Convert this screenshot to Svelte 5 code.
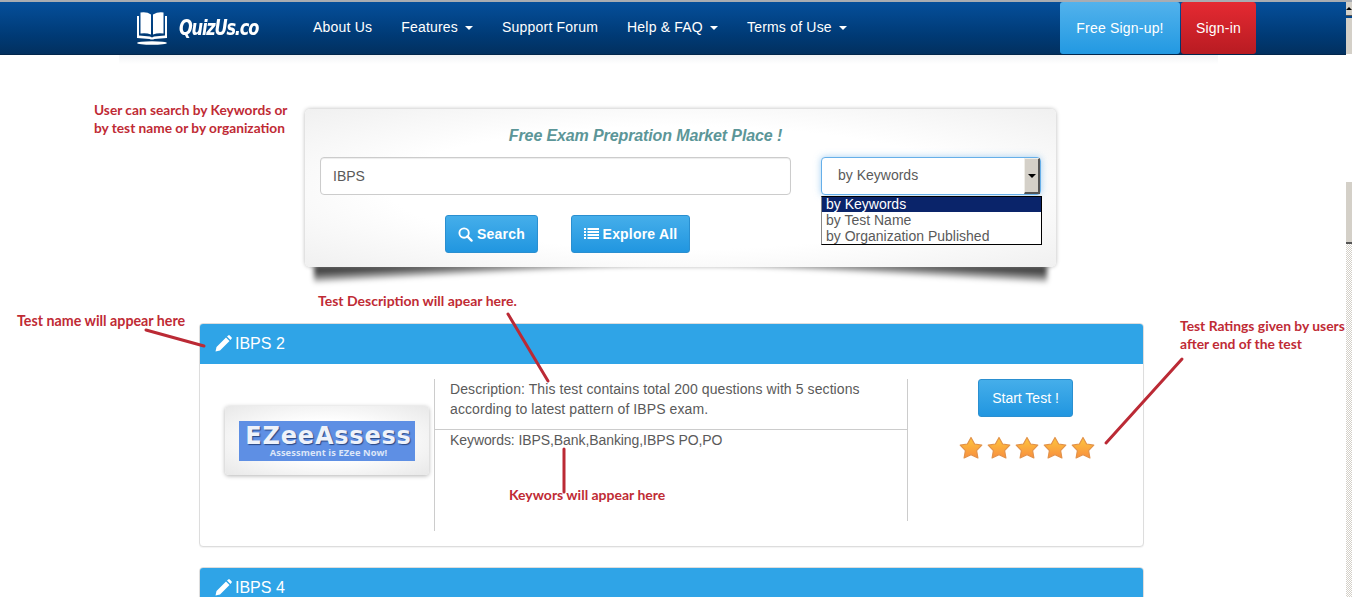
<script>
  const navItems = [
    { label: 'About Us', caret: false },
    { label: 'Features', caret: true },
    { label: 'Support Forum', caret: false },
    { label: 'Help & FAQ', caret: true },
    { label: 'Terms of Use', caret: true }
  ];
  const stars = [0, 1, 2, 3, 4];
</script>

<div class="page">
  <header class="navbar">
    <div class="brand">
      <svg class="book" viewBox="0 0 32 34" width="32" height="34" aria-hidden="true">
        <path d="M1 5 H3 V24.500 L14 25.500 L16 26.500 L18 25.500 L29 24.500 V5 H31 V27 L18.500 28 Q16 29 13.500 28 L1 27 Z" fill="#fff"/>
        <path d="M4.500 1.500 Q11 0.500 15 3.500 V23.500 Q10 21.500 4.500 22.500 Z M17 3.500 Q22 0.500 27.500 1.500 V22.500 Q22 21.500 17 23.500 Z" fill="#fff"/>
        <ellipse cx="16" cy="32" rx="15" ry="1.800" fill="#fff"/>
      </svg>
      <span class="brand-text">QuizUs.co</span>
    </div>
    <nav class="nav">
      {#each navItems as item}
        <span class="nav-item">{item.label}{#if item.caret}<i class="caret"></i>{/if}</span>
      {/each}
    </nav>
    <div class="nav-actions">
      <span class="btn-signup">Free Sign-up!</span>
      <span class="btn-signin">Sign-in</span>
    </div>
  </header>
  <div class="nav-shade"></div>

  <section class="search-row">
    <div class="note note-search">User can search by Keywords or<br />by test name or by organization</div>
    <div class="search-card">
      <h2>Free Exam Prepration Market Place !</h2>
      <div class="search-fields">
        <div class="input">IBPS</div>
        <div class="select-wrap">
          <div class="select">
            <span class="select-label">by Keywords</span>
            <span class="select-arrow"><i></i></span>
          </div>
          <ul class="options">
            <li class="active">by Keywords</li>
            <li>by Test Name</li>
            <li>by Organization Published</li>
          </ul>
        </div>
      </div>
      <div class="search-buttons">
        <span class="btn btn-search">
          <svg viewBox="0 0 16 16" width="15" height="15" aria-hidden="true">
            <circle cx="6.500" cy="6.500" r="5" fill="none" stroke="#fff" stroke-width="2"/>
            <path d="M10 10 L14.500 14.500" stroke="#fff" stroke-width="2.400" stroke-linecap="round"/>
          </svg>
          Search
        </span>
        <span class="btn btn-explore">
          <svg viewBox="0 0 15 13" width="15" height="13" aria-hidden="true">
            <path d="M0 1 H2 M3.500 1 H15 M0 4 H2 M3.500 4 H15 M0 7 H2 M3.500 7 H15 M0 10 H2 M3.500 10 H15" stroke="#fff" stroke-width="1.800"/>
          </svg>
          Explore All
        </span>
      </div>
    </div>
  </section>

  <div class="note note-desc">Test Description will apear here.</div>

  <section class="test-wrap">
    <article class="panel">
      <div class="panel-head">
        <svg class="pencil" viewBox="0 0 17 17" width="17" height="17" aria-hidden="true">
          <path d="M0.500 16.500 L1.500 12 L11 2.500 L14.500 6 L5 15.500 Z M12 1.500 L13.500 0.300 Q14 0 14.500 0.300 L16.700 2.500 Q17 3 16.700 3.500 L15.500 5 Z" fill="#fff"/>
        </svg>
        <span>IBPS 2</span>
      </div>
      <div class="panel-body">
        <div class="logo-col">
          <div class="logo-card">
            <div class="logo">
              <span class="logo-main">EZeeAssess</span>
              <span class="logo-sub">Assessment is EZee Now!</span>
            </div>
          </div>
        </div>
        <div class="info-col">
          <p class="desc">Description: This test contains total 200 questions with 5 sections according to latest pattern of IBPS exam.</p>
          <p class="keys">Keywords: IBPS,Bank,Banking,IBPS PO,PO</p>
        </div>
        <div class="action-col">
          <span class="btn-start">Start Test !</span>
          <div class="stars">
            {#each stars as s}
              <svg viewBox="0 0 24 24" width="24" height="24" aria-hidden="true">
                <defs>
                  <linearGradient id="starFill{s}" x1="0" y1="0" x2="0" y2="1">
                    <stop offset="0" stop-color="#fdc63c"/>
                    <stop offset="1" stop-color="#f98f3f"/>
                  </linearGradient>
                </defs>
                <path d="M12 1.500 L15.600 8 L22.800 9.200 L17.600 14.600 L18.900 22 L12 18.800 L5.100 22 L6.400 14.600 L1.200 9.200 L8.400 8 Z" fill="url(#starFill{s})" stroke="#e2924a" stroke-width="1.200" stroke-linejoin="round"/>
              </svg>
            {/each}
          </div>
        </div>
      </div>
    </article>

    <article class="panel panel-next">
      <div class="panel-head">
        <svg class="pencil" viewBox="0 0 17 17" width="17" height="17" aria-hidden="true">
          <path d="M0.500 16.500 L1.500 12 L11 2.500 L14.500 6 L5 15.500 Z M12 1.500 L13.500 0.300 Q14 0 14.500 0.300 L16.700 2.500 Q17 3 16.700 3.500 L15.500 5 Z" fill="#fff"/>
        </svg>
        <span>IBPS 4</span>
      </div>
    </article>

    <div class="note note-name">Test name will appear here</div>
    <div class="note note-keys">Keywors will appear here</div>
    <div class="note note-rate">Test Ratings given by users<br />after end of the test</div>

    <svg class="arrows" width="1352" height="300" viewBox="0 0 1352 300" aria-hidden="true">
      <g stroke="#bb2a35" stroke-width="3" fill="none" stroke-linecap="round">
        <path d="M146 20 L204 36"/>
        <path d="M508 4 L548 71"/>
        <path d="M564 139 V182"/>
        <path d="M1182 49 L1106 133"/>
      </g>
    </svg>
  </section>

  <div class="scrollbar">
    <div class="sb-btn"><i></i></div>
    <div class="sb-thumb"></div>
    <div class="sb-blank"></div>
    <div class="sb-thumb sb-thumb2"></div>
    <div class="sb-track"></div>
  </div>
</div>

<style>
  :global(body) {
    margin: 0;
    background: #fff;
    font-family: "Liberation Sans", Arial, sans-serif;
    overflow: hidden;
  }
  .page {
    position: relative;
    width: 1352px;
    height: 597px;
    overflow: hidden;
    color: #5a5a5a;
  }
  .navbar {
    display: flex;
    align-items: center;
    height: 55px;
    box-sizing: border-box;
    border-top: 2px solid #a8acb2;
    background: linear-gradient(#054f9b, #003a75 65%, #02305f);
    border-bottom: 1px solid #02264c;
    padding-left: 136px;
    color: #fff;
  }
  .brand {
    display: flex;
    align-items: center;
    gap: 11px;
    width: 177px;
    flex: none;
  }
  .brand-text {
    font-family: "DejaVu Sans Condensed", "DejaVu Sans", sans-serif;
    font-weight: 700;
    font-style: italic;
    font-size: 18px;
    letter-spacing: -1.200px;
    transform: scaleY(1.200);
    margin-top: -2px;
  }
  .nav {
    display: flex;
    gap: 29px;
    font-size: 14px;
    line-height: 20px;
    letter-spacing: .2px;
    margin-top: -3px;
  }
  .nav-item {
    white-space: nowrap;
  }
  .caret {
    display: inline-block;
    margin-left: 7px;
    vertical-align: middle;
    border-top: 4px solid #fff;
    border-left: 4px solid transparent;
    border-right: 4px solid transparent;
  }
  .nav-actions {
    display: flex;
    gap: 1px;
    margin-left: auto;
    margin-right: 96px;
    align-self: stretch;
    font-size: 14px;
    letter-spacing: .2px;
  }
  .btn-signup, .btn-signin {
    display: flex;
    align-items: center;
    justify-content: center;
    border-radius: 3px;
  }
  .btn-signup {
    width: 120px;
    background: linear-gradient(#52b2ec, #2299e2);
  }
  .btn-signin {
    width: 75px;
    background: linear-gradient(#e52a32, #b81b22);
  }
  .nav-shade {
    height: 9px;
    margin: 0 134px 0 119px;
    background: linear-gradient(#f2f3f5, #fff);
  }

  .note {
    font-family: Lato, "Open Sans", "Liberation Sans", sans-serif;
    font-weight: 700;
    font-size: 14px;
    line-height: 18px;
    color: #bf2b35;
    white-space: nowrap;
  }
  .search-row {
    display: flex;
    align-items: flex-start;
    padding: 45px 0 0 94px;
  }
  .note-search {
    width: 211px;
    flex: none;
    margin-top: -8px;
    font-size: 13.700px;
  }
  .search-card {
    position: relative;
    box-sizing: border-box;
    width: 751px;
    height: 158px;
    padding: 17px 15px 0;
    border-radius: 5px;
    background: radial-gradient(ellipse at center, #fff 55%, #f0f0f0 100%);
    box-shadow: 0 0 4px rgba(0, 0, 0, .28);
  }
  .search-card::before, .search-card::after {
    content: "";
    position: absolute;
    z-index: -1;
    top: calc(100% - 2px);
    width: 46%;
    height: 19px;
    filter: blur(2.500px);
  }
  .search-card::before {
    left: 9px;
    background: linear-gradient(to bottom right, rgba(0, 0, 0, .72) 20%, rgba(0, 0, 0, .35) 38%, rgba(0, 0, 0, 0) 50%);
  }
  .search-card::after {
    right: 9px;
    background: linear-gradient(to bottom left, rgba(0, 0, 0, .72) 20%, rgba(0, 0, 0, .35) 38%, rgba(0, 0, 0, 0) 50%);
  }
  h2 {
    margin: 0 70px 11px 0;
    text-align: center;
    font-size: 16px;
    line-height: 20px;
    font-weight: 700;
    font-style: italic;
    letter-spacing: -.12px;
    color: #5c9698;
  }
  .search-fields {
    display: flex;
    align-items: flex-start;
    gap: 30px;
  }
  .input {
    box-sizing: border-box;
    width: 471px;
    height: 38px;
    padding: 0 12px;
    line-height: 36px;
    font-size: 14px;
    border: 1px solid #ccc;
    border-radius: 4px;
    background: #fff;
    box-shadow: inset 0 1px 1px rgba(0, 0, 0, .075);
  }
  .select-wrap {
    position: relative;
    width: 220px;
  }
  .select {
    box-sizing: border-box;
    display: flex;
    align-items: center;
    justify-content: space-between;
    height: 38px;
    padding: 0 0 0 16px;
    font-size: 14px;
    background: #fff;
    border: 1px solid #66afe9;
    border-radius: 4px;
    box-shadow: 0 0 7px rgba(102, 175, 233, .6);
  }
  .select-label {
    margin-top: -2px;
  }
  .select-arrow {
    display: flex;
    align-items: center;
    justify-content: center;
    width: 16px;
    height: 36px;
    background: #d4d0c8;
    border-top: 1px solid #f0eee8;
    border-left: 1px solid #f0eee8;
    border-right: 2px solid #555;
    border-bottom: 2px solid #555;
    box-sizing: border-box;
  }
  .select-arrow i {
    border-top: 4px solid #000;
    border-left: 4px solid transparent;
    border-right: 4px solid transparent;
  }
  .options {
    position: absolute;
    left: 0;
    top: 39px;
    box-sizing: border-box;
    width: 221px;
    height: 49px;
    margin: 0;
    padding: 0;
    list-style: none;
    background: #fff;
    border: 1px solid #000;
    border-left-color: #888;
    font-size: 14px;
    line-height: 16px;
  }
  .options li {
    padding-left: 4px;
    white-space: nowrap;
  }
  .options .active {
    background: #0a246a;
    color: #fff;
    line-height: 14px;
    padding-bottom: 1px;
  }
  .search-buttons {
    display: flex;
    margin-top: 20px;
    padding-left: 125px;
    gap: 33px;
  }
  .btn {
    box-sizing: border-box;
    display: flex;
    align-items: center;
    justify-content: center;
    gap: 4px;
    height: 38px;
    font-size: 14px;
    font-weight: 700;
    color: #fff;
    border-radius: 3px;
    border: 1px solid #2a8fd0;
    background: linear-gradient(#45aeea, #2196e0);
    letter-spacing: .2px;
  }
  .btn-search { width: 93px; }
  .btn-explore { width: 119px; }

  .note-desc {
    margin: 25px 0 0 318px;
    height: 18px;
  }
  .test-wrap {
    position: relative;
    padding: 13px 0 0 199px;
  }
  .panel {
    box-sizing: border-box;
    width: 945px;
    height: 224px;
    border: 1px solid #ddd;
    border-radius: 4px;
    background: #fff;
    box-shadow: 0 1px 1px rgba(0, 0, 0, .05);
    overflow: hidden;
  }
  .panel-next {
    margin-top: 20px;
    height: 60px;
  }
  .panel-head {
    display: flex;
    align-items: center;
    gap: 3px;
    height: 40px;
    box-sizing: border-box;
    padding: 0 0 1px 15px;
    background: #2fa4e7;
    color: #fff;
    font-size: 16px;
  }
  .panel-body {
    display: flex;
    padding: 15px 0 0;
  }
  .logo-col {
    box-sizing: border-box;
    width: 235px;
    height: 152px;
    flex: none;
    padding: 27px 0 0 25px;
    border-right: 1px solid #ccc;
  }
  .logo-card {
    box-sizing: border-box;
    width: 204px;
    height: 69px;
    padding: 15px 14px;
    border-radius: 4px;
    background: radial-gradient(ellipse at center, #fff 40%, #e8e8e8 100%);
    box-shadow: 0 1px 4px rgba(0, 0, 0, .3);
  }
  .logo {
    box-sizing: border-box;
    display: flex;
    flex-direction: column;
    align-items: center;
    width: 176px;
    height: 40px;
    padding: 3px 0 0 3px;
    background: #5e8fe4;
    color: #fff;
    overflow: hidden;
  }
  .logo-main {
    font-family: "DejaVu Sans", sans-serif;
    font-weight: 700;
    font-size: 24px;
    line-height: 24px;
    letter-spacing: .8px;
    white-space: nowrap;
    color: #eef2fa;
    text-shadow: 1px 1px 1px rgba(20, 40, 90, .7);
  }
  .logo-sub {
    font-family: "Open Sans", sans-serif;
    font-weight: 700;
    font-size: 9.300px;
    line-height: 10px;
    letter-spacing: .1px;
    color: #dce6f8;
    white-space: nowrap;
  }
  .info-col {
    box-sizing: border-box;
    width: 473px;
    height: 142px;
    flex: none;
    border-right: 1px solid #ccc;
    font-size: 14px;
    line-height: 20px;
  }
  .desc {
    margin: 0;
    padding: 0 15px;
    height: 50px;
    letter-spacing: .09px;
    border-bottom: 1px solid #ccc;
  }
  .keys {
    margin: 0;
    padding: 0 15px;
    letter-spacing: -.08px;
  }
  .action-col {
    flex: 1;
    display: flex;
    flex-direction: column;
    align-items: center;
  }
  .btn-start {
    box-sizing: border-box;
    display: flex;
    align-items: center;
    justify-content: center;
    width: 95px;
    height: 38px;
    font-size: 14px;
    color: #fff;
    border-radius: 3px;
    border: 1px solid #2a8fd0;
    background: linear-gradient(#45aeea, #2196e0);
  }
  .stars {
    display: flex;
    gap: 4px;
    margin: 19px 0 0 3px;
  }
  .note-name, .note-keys, .note-rate {
    position: absolute;
  }
  .note-name { left: 17px; top: 2px; font-size: 14.250px; }
  .note-keys { left: 509px; top: 176px; }
  .note-rate { left: 1180px; top: 7px; font-size: 13.850px; }
  .arrows {
    position: absolute;
    left: 0;
    top: 0;
    pointer-events: none;
  }
  .scrollbar {
    position: absolute;
    right: 0;
    top: 2px;
    width: 6px;
    height: 595px;
    display: flex;
    flex-direction: column;
  }
  .sb-btn {
    display: flex;
    align-items: center;
    justify-content: center;
    height: 14px;
    background: #d4d0c8;
    border-bottom: 1px solid #555;
    box-sizing: border-box;
  }
  .sb-btn i {
    border-bottom: 3px solid #000;
    border-left: 3px solid transparent;
    border-right: 3px solid transparent;
  }
  .sb-thumb {
    height: 36px;
    margin-top: 2px;
    background: #d4d0c8;
  }
  .sb-blank {
    height: 128px;
    background: #fff;
  }
  .sb-thumb2 {
    margin-top: 0;
    height: 60px;
    border-bottom: 2px solid #555;
  }
  .sb-track {
    flex: 1;
    background-image: repeating-conic-gradient(#d4d0c8 0 25%, #fff 0 50%);
    background-size: 2px 2px;
  }
</style>
